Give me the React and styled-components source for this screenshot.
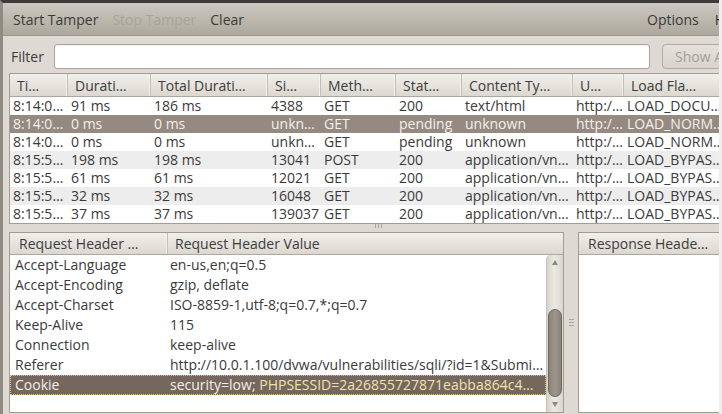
import React from "react";
import styled, { createGlobalStyle } from "styled-components";

const GlobalStyle = createGlobalStyle`
  html, body { margin: 0; padding: 0; background: #efefef; }
  body {
    font-family: "Open Sans", "DejaVu Sans", sans-serif;
    font-size: 14px;
    color: #3c3c3c;
  }
`;

const COLS = [58, 83, 117, 53, 75, 66, 111, 51, 120];
const GRID = COLS.map((w) => w + "px").join(" ");

const headers = ["Ti…", "Durati…", "Total Durati…", "Si…", "Meth…", "Stat…", "Content Ty…", "U…", "Load Fla…"];

const requests = [
  ["8:14:0…", "91 ms", "186 ms", "4388", "GET", "200", "text/html", "http:/…", "LOAD_DOCU…"],
  ["8:14:0…", "0 ms", "0 ms", "unkn…", "GET", "pending", "unknown", "http:/…", "LOAD_NORM…"],
  ["8:14:0…", "0 ms", "0 ms", "unkn…", "GET", "pending", "unknown", "http:/…", "LOAD_NORM…"],
  ["8:15:5…", "198 ms", "198 ms", "13041", "POST", "200", "application/vn…", "http:/…", "LOAD_BYPAS…"],
  ["8:15:5…", "61 ms", "61 ms", "12021", "GET", "200", "application/vn…", "http:/…", "LOAD_BYPAS…"],
  ["8:15:5…", "32 ms", "32 ms", "16048", "GET", "200", "application/vn…", "http:/…", "LOAD_BYPAS…"],
  ["8:15:5…", "37 ms", "37 ms", "139037", "GET", "200", "application/vn…", "http:/…", "LOAD_BYPAS…"],
];

const reqHeaders = [
  ["Accept-Language", "en-us,en;q=0.5"],
  ["Accept-Encoding", "gzip, deflate"],
  ["Accept-Charset", "ISO-8859-1,utf-8;q=0.7,*;q=0.7"],
  ["Keep-Alive", "115"],
  ["Connection", "keep-alive"],
  ["Referer", "http://10.0.1.100/dvwa/vulnerabilities/sqli/?id=1&Submi…"],
];

const Window = styled.div`
  width: 716px;
  height: 411px;
  border-top: 3px solid #3c3b37;
  border-left: 3px solid #8f8b83;
  background: #dedad3;
  overflow: hidden;
`;

const Frame = styled.div`
  width: 750px;
  height: 100%;
  display: flex;
  flex-direction: column;
`;

const MenuBar = styled.div`
  height: 32px;
  flex-shrink: 0;
  display: flex;
  align-items: center;
  padding: 0 8px 0 10px;
  background: linear-gradient(#cdc9c0, #aca89d);
  border-bottom: 1px solid #9c988e;
`;

const MenuItem = styled.span`
  white-space: nowrap;
  margin-right: ${(p) => p.$gap || 0}px;
  color: ${(p) => (p.$disabled ? "#aaa59a" : "#3a3a3a")};
  ${(p) => p.$end && "margin-left: auto;"}
`;

const FilterRow = styled.div`
  display: flex;
  align-items: center;
  height: 25px;
  padding: 8px 0 4px 8px;
  flex-shrink: 0;
`;

const Label = styled.span`
  width: 43px;
  flex-shrink: 0;
`;

const Input = styled.div`
  width: 596px;
  height: 25px;
  box-sizing: border-box;
  flex-shrink: 0;
  background: #fff;
  border: 1px solid #a9a59d;
  border-radius: 3px;
  box-shadow: inset 0 1px 1px rgba(0, 0, 0, 0.06);
`;

const Button = styled.div`
  margin-left: 12px;
  width: 100px;
  height: 25px;
  box-sizing: border-box;
  flex-shrink: 0;
  display: flex;
  align-items: center;
  padding-left: 12px;
  border: 1px solid #b0aca4;
  border-radius: 4px;
  background: linear-gradient(#e4e1db, #d8d4cd);
  color: #a3a098;
  white-space: nowrap;
`;

const Table = styled.div`
  margin-left: 6px;
  width: ${COLS.reduce((a, b) => a + b, 0) + 2}px;
  flex-shrink: 0;
  border: 1px solid #a19d95;
  background: #fff;
`;

const HeadRow = styled.div`
  display: grid;
  grid-template-columns: ${(p) => p.$cols};
  height: ${(p) => p.$h}px;
  background: linear-gradient(#f1efeb, #dcd8d0);
  border-bottom: 1px solid #aca89f;
`;

const HeadCell = styled.div`
  display: flex;
  align-items: center;
  padding-left: ${(p) => p.$pad || 7}px;
  border-right: ${(p) => (p.$last ? "none" : "1px solid #c2beb6")};
  box-shadow: ${(p) => (p.$last ? "none" : "inset -1px 0 0 #f4f2ee")};
  white-space: nowrap;
  overflow: hidden;
  min-width: 0;
`;

const Row = styled.div`
  display: grid;
  grid-template-columns: ${GRID};
  height: 18px;
  line-height: 18px;
  background: ${(p) => (p.$selected ? "#958a81" : p.$odd ? "#ededed" : "#fff")};
  color: ${(p) => (p.$selected ? "#f4f0ea" : "#3a3a3a")};
`;

const Cell = styled.div`
  padding-left: 3px;
  white-space: nowrap;
  overflow: hidden;
  text-overflow: ellipsis;
  min-width: 0;
`;

const HSplit = styled.div`
  height: 8px;
  flex-shrink: 0;
  display: flex;
  justify-content: center;
`;

const HGrip = styled.div`
  width: 7px;
  height: 4px;
  background: repeating-linear-gradient(90deg, #aaa69d 0 1px, transparent 1px 3px);
`;

const Bottom = styled.div`
  display: flex;
  margin-left: 6px;
  height: 181px;
  flex-shrink: 0;
`;

const Pane = styled.div`
  width: ${(p) => p.$w}px;
  flex-shrink: 0;
  box-sizing: border-box;
  border: 1px solid #a19d95;
  background: #fff;
  display: flex;
  flex-direction: column;
`;

const PaneBody = styled.div`
  flex: 1;
  display: flex;
  min-height: 0;
`;

const List = styled.div`
  flex: 1;
  min-width: 0;
`;

const HRow = styled.div`
  display: grid;
  grid-template-columns: 158px 1fr;
  height: 20px;
  line-height: 20px;
  box-sizing: border-box;
  background: ${(p) => (p.$selected ? "#75675e" : "transparent")};
  color: ${(p) => (p.$selected ? "#f3efe9" : "#3a3a3a")};
  outline: ${(p) => (p.$selected ? "1px dotted #d9c47e" : "none")};
  outline-offset: -1px;
`;

const HName = styled.div`
  padding-left: 5px;
  white-space: nowrap;
  overflow: hidden;
`;

const HValue = styled.div`
  padding-left: 2px;
  white-space: nowrap;
  overflow: hidden;
  text-overflow: ellipsis;
`;

const Session = styled.span`
  color: #f0e2ab;
`;

const ScrollTrack = styled.div`
  width: 17px;
  flex-shrink: 0;
  box-sizing: border-box;
  display: flex;
  flex-direction: column;
  align-items: center;
  background: linear-gradient(90deg, #d7d3cb, #ece9e4 45%, #dbd7cf);
  border-left: 1px solid #c6c2ba;
  border-radius: 5px 0 0 0;
`;

const ArrowBox = styled.div`
  height: ${(p) => p.$h}px;
  flex-shrink: 0;
  display: flex;
  align-items: center;
  justify-content: center;
`;

const Arrow = styled.div`
  width: 0;
  height: 0;
  border-left: 3px solid transparent;
  border-right: 3px solid transparent;
  ${(p) => (p.$down ? "border-top" : "border-bottom")}: 5px solid #8d897f;
`;

const Spacer = styled.div`
  flex: 1;
`;

const Thumb = styled.div`
  width: 14px;
  height: 88px;
  flex-shrink: 0;
  box-sizing: border-box;
  border: 1px solid #6f6a62;
  border-radius: 7px;
  background: linear-gradient(90deg, #8b8379, #9d968c 50%, #8a8278);
`;

const VSplit = styled.div`
  width: 14px;
  flex-shrink: 0;
  display: flex;
  align-items: center;
  justify-content: center;
`;

const VGrip = styled.div`
  width: 5px;
  height: 7px;
  background: repeating-linear-gradient(180deg, #aaa69d 0 1px, transparent 1px 3px);
`;

export default function App() {
  return (
    <>
      <GlobalStyle />
      <Window>
        <Frame>
          <MenuBar>
            <MenuItem $gap={14}>Start Tamper</MenuItem>
            <MenuItem $gap={14} $disabled>Stop Tamper</MenuItem>
            <MenuItem>Clear</MenuItem>
            <MenuItem $end $gap={16}>Options</MenuItem>
            <MenuItem>Help</MenuItem>
          </MenuBar>

          <FilterRow>
            <Label>Filter</Label>
            <Input />
            <Button>Show All</Button>
          </FilterRow>

          <Table>
            <HeadRow $cols={GRID} $h={22}>
              {headers.map((h, i) => (
                <HeadCell key={i} $last={i === headers.length - 1}>{h}</HeadCell>
              ))}
            </HeadRow>
            {requests.map((r, i) => (
              <Row key={i} $odd={i % 2 === 1} $selected={i === 1}>
                {r.map((c, j) => (
                  <Cell key={j}>{c}</Cell>
                ))}
              </Row>
            ))}
          </Table>

          <HSplit>
            <HGrip />
          </HSplit>

          <Bottom>
            <Pane $w={555}>
              <HeadRow $cols="158px 1fr" $h={21}>
                <HeadCell $pad={9}>Request Header …</HeadCell>
                <HeadCell $last>Request Header Value</HeadCell>
              </HeadRow>
              <PaneBody>
                <List>
                  {reqHeaders.map(([n, v]) => (
                    <HRow key={n}>
                      <HName>{n}</HName>
                      <HValue>{v}</HValue>
                    </HRow>
                  ))}
                  <HRow $selected>
                    <HName>Cookie</HName>
                    <HValue>
                      security=low; <Session>PHPSESSID=2a26855727871eabba864c4…</Session>
                    </HValue>
                  </HRow>
                </List>
                <ScrollTrack>
                  <ArrowBox $h={14}><Arrow /></ArrowBox>
                  <Spacer />
                  <Thumb />
                  <ArrowBox $h={15}><Arrow $down /></ArrowBox>
                </ScrollTrack>
              </PaneBody>
            </Pane>
            <VSplit>
              <VGrip />
            </VSplit>
            <Pane $w={200}>
              <HeadRow $cols="130px 1fr" $h={21}>
                <HeadCell $pad={9} $last>Response Heade…</HeadCell>
                <HeadCell $last />
              </HeadRow>
            </Pane>
          </Bottom>
        </Frame>
      </Window>
    </>
  );
}
